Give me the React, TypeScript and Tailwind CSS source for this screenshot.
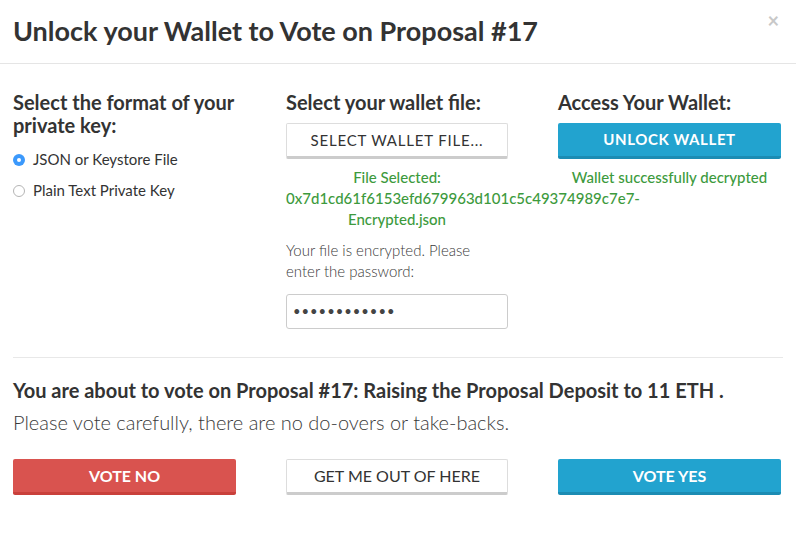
const App = () => {
  return (
    <div className="w-[796px] h-[535px] bg-white text-[#333] font-['Lato','Noto_Sans',sans-serif] overflow-hidden">
      <div className="relative h-[64px] border-b border-[#e5e5e5] px-[13px] flex items-center">
        <h1 className="text-[27px] font-bold leading-none pb-[2px]">Unlock your Wallet to Vote on Proposal #17</h1>
        <span className="absolute right-[17px] top-[10px] text-[20px] leading-none font-bold text-[#c8c8c8]">×</span>
      </div>

      <div className="px-[13px]">
        <div className="grid grid-cols-[273px_272px_223px] pt-[27px] pb-[28px] border-b border-[#e8e8e8]">
          <div>
            <h3 className="text-[20px] font-bold leading-[23px]">Select the format of your private key:</h3>
            <div className="mt-[12px] flex flex-col gap-[10px] text-[15px]">
              <label className="flex items-center gap-[8px] h-[21px]">
                <span className="w-[12px] h-[12px] rounded-full bg-[#3b99fc] flex items-center justify-center">
                  <span className="w-[4px] h-[4px] rounded-full bg-white" />
                </span>
                JSON or Keystore File
              </label>
              <label className="flex items-center gap-[8px] h-[21px]">
                <span className="w-[12px] h-[12px] rounded-full border border-[#b5b5b5] bg-white" />
                Plain Text Private Key
              </label>
            </div>
          </div>

          <div>
            <h3 className="text-[20px] font-bold leading-[23px] whitespace-nowrap">Select your wallet file:</h3>
            <button className="mt-[9px] w-[222px] h-[36px] bg-white border border-[#ddd] border-b-[3px] border-b-[#ccc] rounded-[2px] text-[15px] tracking-[0.8px]">
              SELECT WALLET FILE...
            </button>
            <p className="mt-[8px] text-center text-[15px] leading-[21px] text-[#3d9a3d] font-medium w-[222px]">
              File Selected: 0x7d1cd61f6153efd679963d101c5c49374989c7e7-Encrypted.json
            </p>
            <p className="mt-[10px] text-[15px] leading-[21px] font-light text-[#3a3a3a] w-[205px]">
              Your file is encrypted. Please enter the password:
            </p>
            <div className="mt-[12px] w-[222px] h-[35px] border border-[#ccc] rounded-[3px] flex items-center px-[6px] text-[13px] tracking-[1px] text-[#444]">
              ••••••••••••
            </div>
          </div>

          <div>
            <h3 className="text-[20px] font-bold leading-[23px] whitespace-nowrap">Access Your Wallet:</h3>
            <button className="mt-[9px] w-[223px] h-[36px] bg-[#22a3cf] border-b-[3px] border-[#1c8cb3] rounded-[2px] text-white font-bold text-[15px] tracking-[0.6px]">
              UNLOCK WALLET
            </button>
            <p className="mt-[8px] text-center text-[15px] leading-[21px] text-[#3d9a3d] font-medium">
              Wallet successfully decrypted
            </p>
          </div>
        </div>

        <h3 className="mt-[20px] text-[20px] font-bold leading-[24px]">
          You are about to vote on Proposal #17: Raising the Proposal Deposit to 11 ETH .
        </h3>
        <p className="mt-[8px] text-[20px] font-light leading-[24px] text-[#3a3a3a]">
          Please vote carefully, there are no do-overs or take-backs.
        </p>

        <div className="mt-[25px] grid grid-cols-[273px_272px_223px]">
          <button className="w-[223px] h-[36px] bg-[#d9534f] border-b-[3px] border-[#c9403b] rounded-[2px] text-white font-bold text-[16px]">
            VOTE NO
          </button>
          <button className="w-[222px] h-[36px] bg-white border border-[#ddd] border-b-[3px] border-b-[#ccc] rounded-[2px] text-[16px]">
            GET ME OUT OF HERE
          </button>
          <button className="w-[223px] h-[36px] bg-[#22a3cf] border-b-[3px] border-[#1c8cb3] rounded-[2px] text-white font-bold text-[16px]">
            VOTE YES
          </button>
        </div>
      </div>
    </div>
  );
};

export default App;
